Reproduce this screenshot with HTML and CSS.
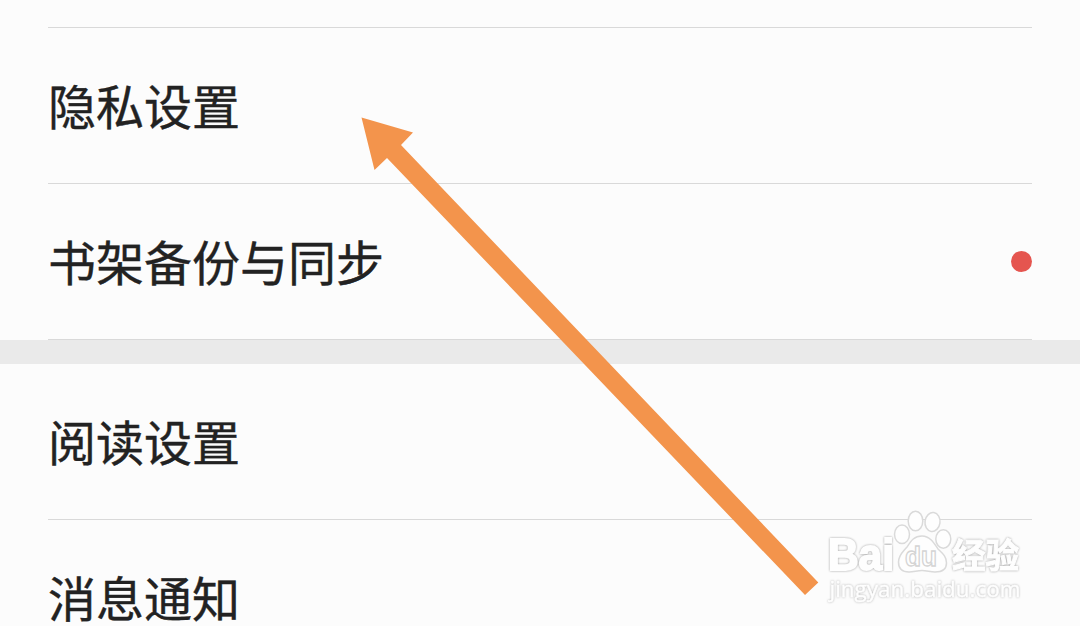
FILE: index.html
```html
<!DOCTYPE html>
<html lang="zh-CN">
<head>
<meta charset="utf-8">
<title>设置</title>
<link rel="stylesheet" href="styles.css">
</head>
<body>
<main class="screen">
  <section class="group">
    <div class="row row-cut"></div>
    <div class="row"><span class="label">隐私设置</span></div>
    <div class="row"><span class="label">书架备份与同步</span><i class="dot"></i></div>
  </section>
  <section class="group">
    <div class="row"><span class="label">阅读设置</span></div>
    <div class="row"><span class="label">消息通知</span></div>
  </section>
  <svg class="overlay" viewBox="0 0 1080 626">
    <polygon class="arrow" points="361.5,117.5 413,132.5 401,145 818.3,582.5 805,595 387,158 374.5,170"/>
    <g class="mark">
      <text class="brand" x="828" y="570" textLength="66" lengthAdjust="spacingAndGlyphs">Bai</text>
      <ellipse cx="902" cy="534.3" rx="7.5" ry="9.3"/>
      <ellipse cx="915.5" cy="521" rx="7.3" ry="9.8"/>
      <ellipse cx="932.5" cy="522" rx="7.5" ry="9.5" transform="rotate(8 932.5 522)"/>
      <ellipse cx="943.3" cy="539" rx="7.5" ry="9.3"/>
      <path d="M922 536C930 536 934 543 938 549C942 553 946.500 556 946.500 563C946.500 569 942 572 935 572C930 572 927 570.500 922 570.500C917 570.500 914 572 909 572C902 572 898.500 568 898.500 562C898.500 555 903 552 907 547C911 541 914 536 922 536Z"/>
      <text class="du" x="905" y="565.500" textLength="32" lengthAdjust="spacingAndGlyphs">du</text>
      <text class="cn" x="952" y="568" textLength="67" lengthAdjust="spacingAndGlyphs">经验</text>
      <text class="url" x="829.500" y="596.500" textLength="191" lengthAdjust="spacingAndGlyphs">jingyan.baidu.com</text>
    </g>
  </svg>
</main>
</body>
</html>
```
FILE: styles.css
```css
body {
  margin: 0;
  background: #fcfcfc;
}

.screen {
  position: relative;
  height: 626px;
  overflow: hidden;
  font-family: "Noto Sans CJK SC", sans-serif;
}

.group + .group {
  border-top: 24px solid #eaeaea;
}

.row {
  box-sizing: border-box;
  display: flex;
  align-items: center;
  justify-content: space-between;
  height: 156px;
  margin: 0 48px;
  border-bottom: 1px solid #d9d9d9;
}

.row-cut {
  height: 28px;
}

.label {
  padding-bottom: 4px;
  color: #222;
  font-size: 48px;
  line-height: 72px;
  -webkit-text-stroke: 0.4px #222;
}

.dot {
  width: 21px;
  height: 21px;
  border-radius: 50%;
  background: #e5554f;
}

.overlay {
  position: absolute;
  inset: 0;
  width: 1080px;
  height: 626px;
}

.arrow {
  fill: #f3944c;
}

.mark {
  fill: #fefefe;
  stroke: #dadada;
  stroke-width: 1.5px;
}

.mark text {
  stroke: #fefefe;
  stroke-width: 1px;
  filter: drop-shadow(0 0 0.8px #a0a0a0);
}

.mark .brand {
  font: bold 44px "Liberation Sans", sans-serif;
  stroke-width: 2px;
}

.mark .du {
  font: bold 27px "Liberation Sans", sans-serif;
  stroke: #d4d4d4;
  stroke-width: 1.3px;
  filter: none;
}

.mark .cn {
  font: bold 34px "Noto Sans CJK SC", sans-serif;
}

.mark .url {
  font: 22.5px "Open Sans", sans-serif;
  stroke-width: 0.5px;
  filter: drop-shadow(0 0 0.8px #b4b4b4);
}
```
